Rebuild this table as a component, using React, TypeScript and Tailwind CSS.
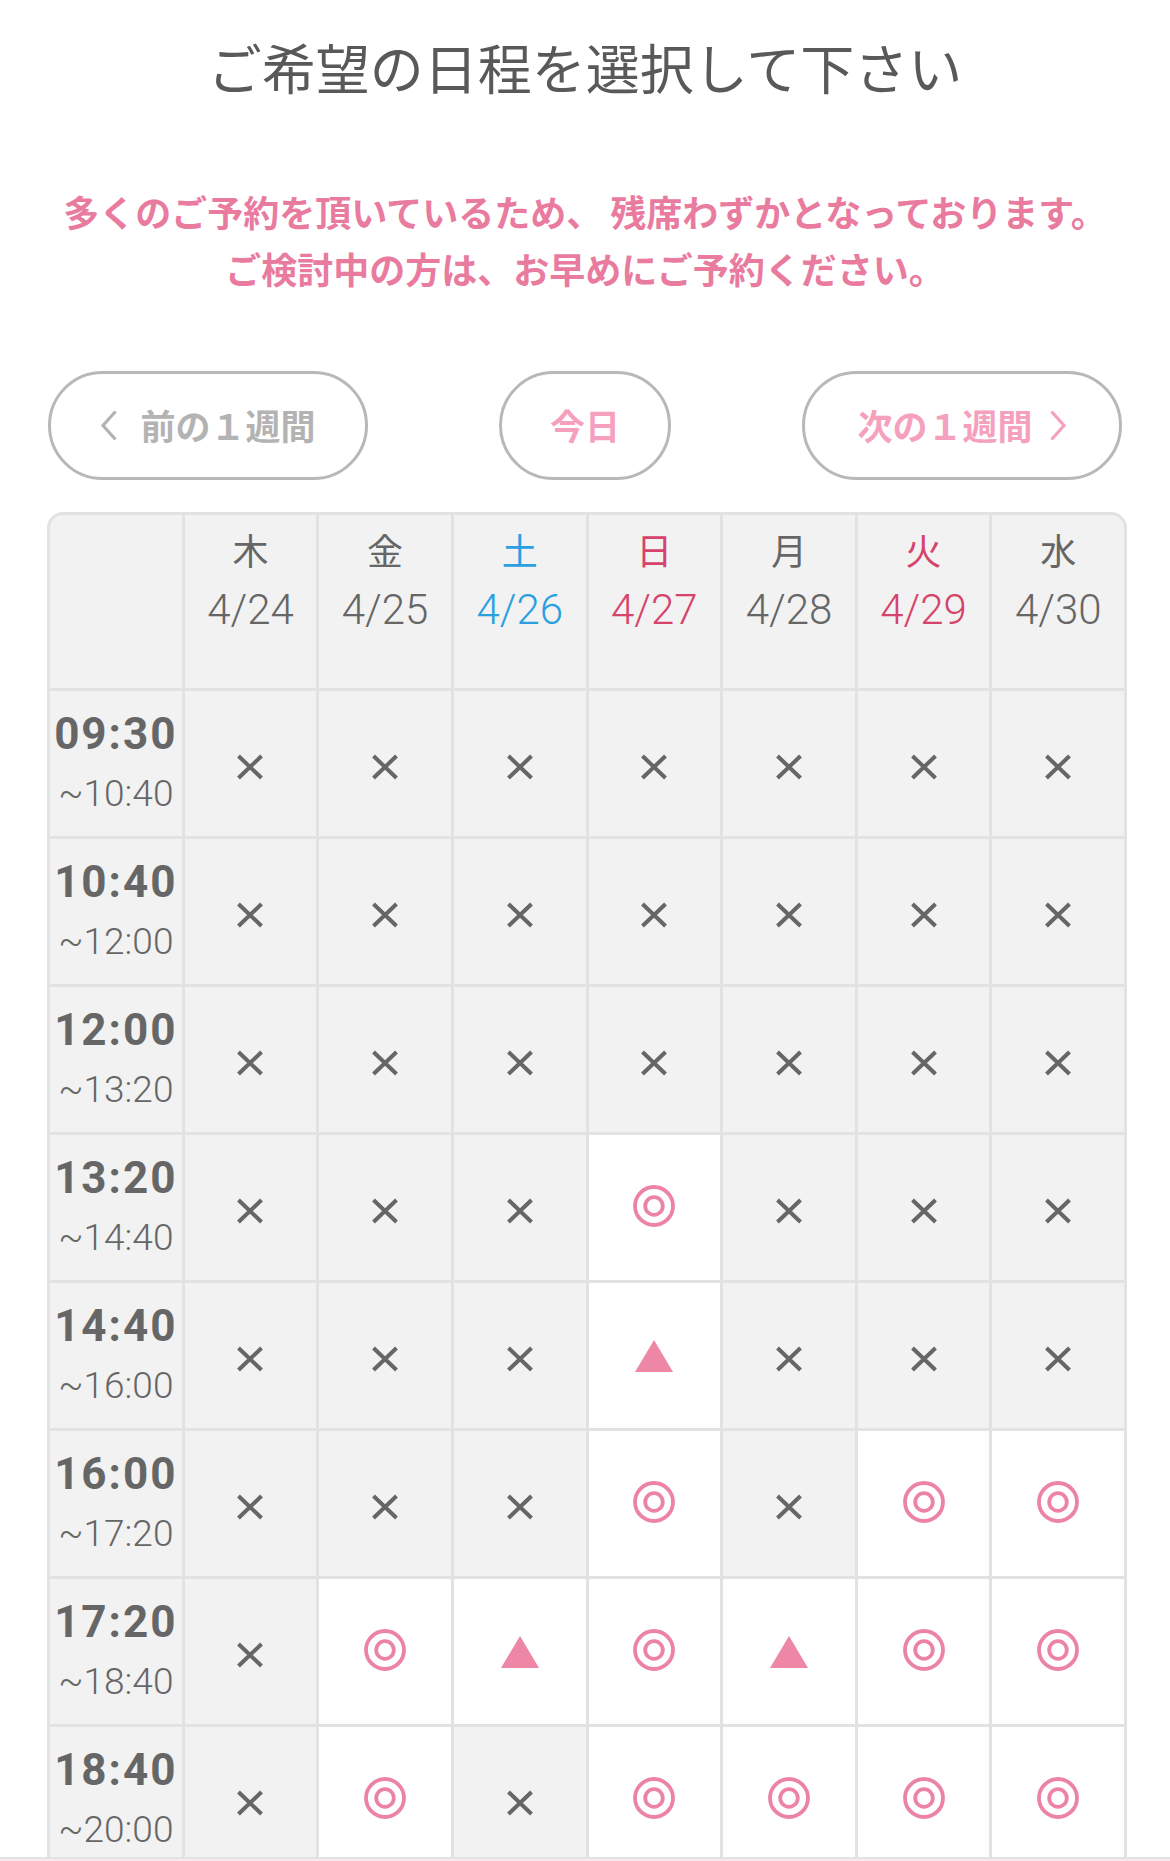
import React from 'react';

type Mark = 'x' | 'o' | 't';

const days = [
  { dow: '木', date: '4/24', color: 'text-[#666666]' },
  { dow: '金', date: '4/25', color: 'text-[#666666]' },
  { dow: '土', date: '4/26', color: 'text-[#2ba0e0]' },
  { dow: '日', date: '4/27', color: 'text-[#d6436b]' },
  { dow: '月', date: '4/28', color: 'text-[#666666]' },
  { dow: '火', date: '4/29', color: 'text-[#d6436b]' },
  { dow: '水', date: '4/30', color: 'text-[#666666]' },
];

const slots: { start: string; end: string; marks: Mark[] }[] = [
  { start: '09:30', end: '~10:40', marks: ['x', 'x', 'x', 'x', 'x', 'x', 'x'] },
  { start: '10:40', end: '~12:00', marks: ['x', 'x', 'x', 'x', 'x', 'x', 'x'] },
  { start: '12:00', end: '~13:20', marks: ['x', 'x', 'x', 'x', 'x', 'x', 'x'] },
  { start: '13:20', end: '~14:40', marks: ['x', 'x', 'x', 'o', 'x', 'x', 'x'] },
  { start: '14:40', end: '~16:00', marks: ['x', 'x', 'x', 't', 'x', 'x', 'x'] },
  { start: '16:00', end: '~17:20', marks: ['x', 'x', 'x', 'o', 'x', 'o', 'o'] },
  { start: '17:20', end: '~18:40', marks: ['x', 'o', 't', 'o', 't', 'o', 'o'] },
  { start: '18:40', end: '~20:00', marks: ['x', 'o', 'x', 'o', 'o', 'o', 'o'] },
];

const Cross = () => (
  <svg width="28" height="26" viewBox="0 0 28 26" className="mt-[6px]">
    <path d="M2.5 2 L25.5 24 M25.5 2 L2.5 24" stroke="#666666" strokeWidth="4" />
  </svg>
);

const DoubleCircle = () => (
  <svg width="42" height="42" viewBox="0 0 42 42" className="-mt-[4px]">
    <circle cx="21" cy="21" r="19" fill="none" stroke="#ec83a4" strokeWidth="3.8" />
    <circle cx="21" cy="21" r="8.8" fill="none" stroke="#ec83a4" strokeWidth="3.8" />
  </svg>
);

const Triangle = () => (
  <svg width="38" height="32" viewBox="0 0 38 32">
    <polygon points="19,0 38,32 0,32" fill="#ee86a6" />
  </svg>
);

const Slot: React.FC<{ mark: Mark }> = ({ mark }) => (
  <div
    className={
      'h-[145px] flex items-center justify-center ' +
      (mark === 'x' ? 'bg-[#f2f2f2]' : 'bg-white')
    }
  >
    {mark === 'x' && <Cross />}
    {mark === 'o' && <DoubleCircle />}
    {mark === 't' && <Triangle />}
  </div>
);

export default function App() {
  return (
    <div className="h-[1861px] overflow-hidden flex flex-col bg-white font-['Roboto','Noto_Sans_CJK_JP',sans-serif]">
      <div className="flex-1 overflow-hidden">
        <h1 className="pt-[29px] text-center text-[54px] leading-[76px] text-[#595959] font-normal font-['Noto_Sans_CJK_JP',sans-serif]">
          ご希望の日程を選択して下さい
        </h1>

        <div className="mt-[78px] text-center text-[36px] leading-[57px] font-bold text-[#e97b9f] font-['Noto_Sans_CJK_JP',sans-serif]">
          <p>多くのご予約を頂いているため、 残席わずかとなっております。</p>
          <p>ご検討中の方は、お早めにご予約ください。</p>
        </div>

        <div className="mt-[74px] px-[48px] flex items-center justify-between font-['Noto_Sans_CJK_JP',sans-serif] font-bold text-[35px]">
          <button className="w-[320px] h-[109px] rounded-full border-[3px] border-[#b8b8b8] flex items-center justify-center gap-[22px] text-[#b3b3b3]">
            <svg width="18" height="31" viewBox="0 0 18 31">
              <polyline points="15.5,1.5 3,15.5 15.5,29.5" fill="none" stroke="#b3b3b3" strokeWidth="3.2" />
            </svg>
            <span>前の１週間</span>
          </button>
          <button className="w-[172px] h-[109px] rounded-full border-[3px] border-[#b8b8b8] flex items-center justify-center text-[#f5a0bd]">
            今日
          </button>
          <button className="w-[320px] h-[109px] rounded-full border-[3px] border-[#b8b8b8] flex items-center justify-center gap-[16px] text-[#f5a0bd]">
            <span>次の１週間</span>
            <svg width="18" height="31" viewBox="0 0 18 31">
              <polyline points="2.5,1.5 15,15.5 2.5,29.5" fill="none" stroke="#f5a0bd" strokeWidth="3.2" />
            </svg>
          </button>
        </div>

        <div className="mt-[32px] ml-[47px] w-[1080px] grid grid-cols-8 gap-[3px] bg-[#e2e2e2] border-[3px] border-[#e2e2e2] rounded-t-[16px] overflow-hidden">
          <div className="h-[173px] bg-[#f2f2f2]" />
          {days.map((d) => (
            <div key={d.date} className={'h-[173px] bg-[#f2f2f2] flex flex-col items-center pt-[8px] ' + d.color}>
              <span className="text-[36px] leading-[52px] font-['Noto_Sans_CJK_JP',sans-serif]">{d.dow}</span>
              <span className="mt-[6px] text-[42px] leading-[58px] font-light">{d.date}</span>
            </div>
          ))}

          {slots.map((s) => (
            <React.Fragment key={s.start}>
              <div className="h-[145px] bg-[#f2f2f2] flex flex-col items-center justify-center text-[#666666]">
                <span className="text-[44px] leading-[59px] font-bold tracking-[2px]">{s.start}</span>
                <span className="text-[37px] leading-[59px] font-light">{s.end}</span>
              </div>
              {s.marks.map((m, i) => (
                <Slot key={i} mark={m} />
              ))}
            </React.Fragment>
          ))}
        </div>
      </div>
      <div className="h-[4px] border-t-[2px] border-[#e3e3e3] bg-[#f9e9ef]" />
    </div>
  );
}
